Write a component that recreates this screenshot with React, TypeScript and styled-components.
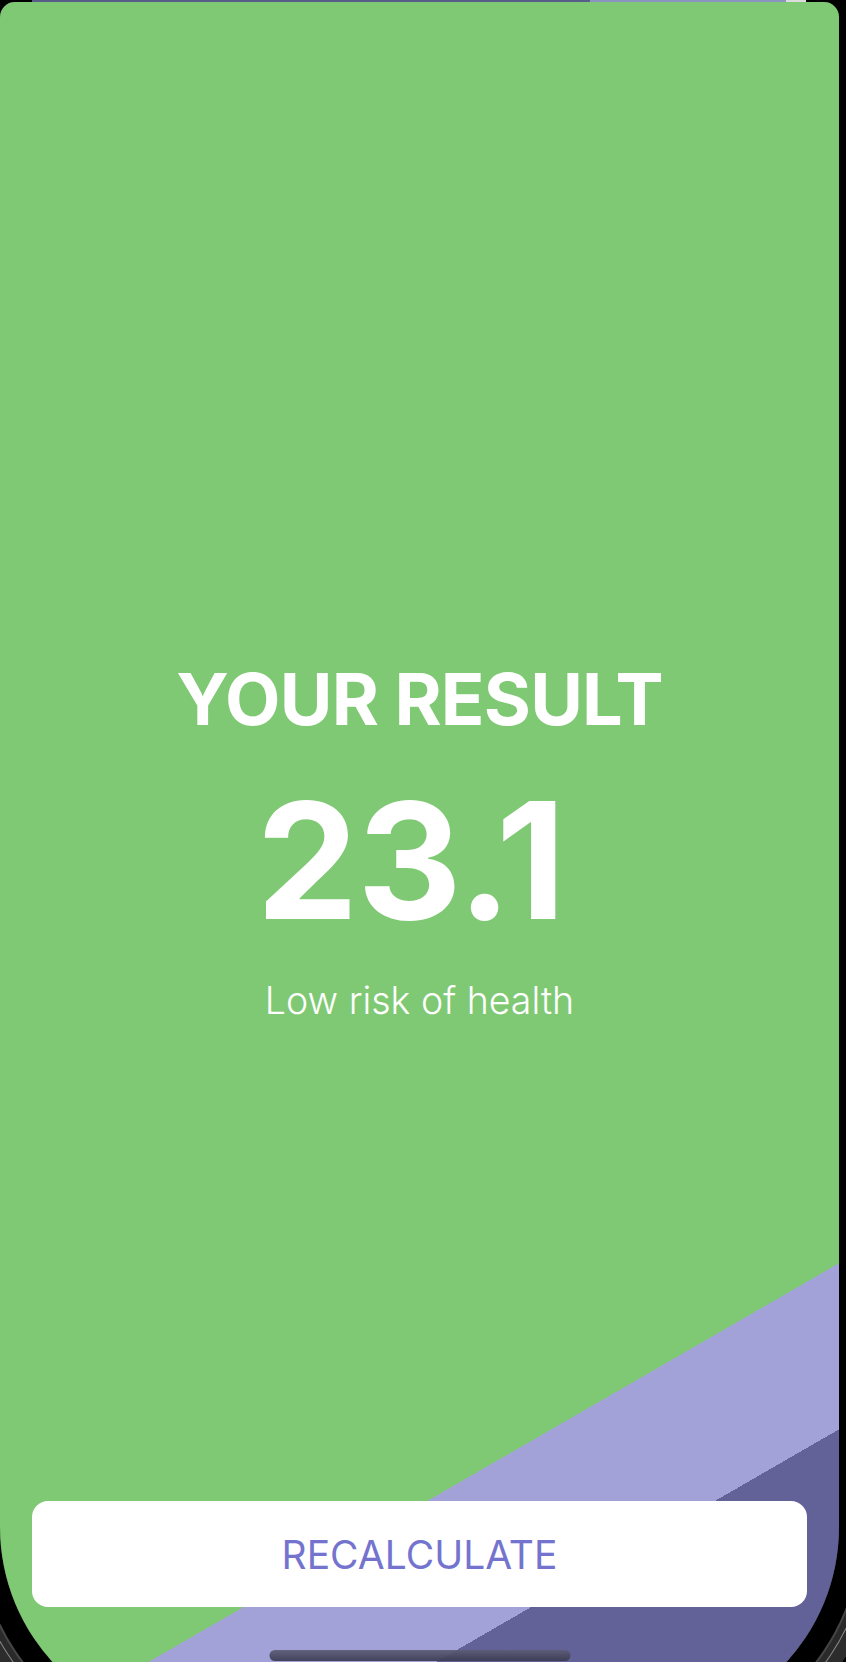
import React from "react";
import styled, { createGlobalStyle } from "styled-components";

const Global = createGlobalStyle`
  html, body {
    margin: 0;
    padding: 0;
    background: #000;
  }
  #root {
    height: 100vh;
  }
`;

const Viewport = styled.div`
  height: 100vh;
  overflow: hidden;
  background: #000;
  display: flex;
  flex-direction: column;
  font-family: Inter, "Noto Sans", "Liberation Sans", sans-serif;
`;

const TopStrip = styled.div`
  position: relative;
  z-index: 1;
  display: flex;
  height: 2px;
  flex-shrink: 0;
`;

const StripSegment = styled.div<{ $w: number; $c: string }>`
  width: ${(p) => p.$w}px;
  background: ${(p) => p.$c};
`;

const GREEN = "#80c974";
const LILAC = "#a2a2d8";
const PURPLE = "#626298";

const Screen = styled.div`
  position: relative;
  width: 839px;
  height: 1725px;
  flex-shrink: 0;
  box-sizing: border-box;
  border-radius: 15px 15px 200px 200px;
  background: linear-gradient(
    150deg,
    ${GREEN} 1511.8px,
    ${LILAC} 1511.8px,
    ${LILAC} 1655.6px,
    ${PURPLE} 1655.6px
  );
  box-shadow: 0 0 0 22px #000, 0 0 0 24px #454545, 0 0 0 30px #2a2a2a,
    0 0 0 31px #8a8a8a, 0 0 0 44px #2c2c2c;
  display: flex;
  flex-direction: column;
  align-items: center;
  padding: 661px 32px 120px;
`;

const Content = styled.div`
  flex: 1;
  display: flex;
  flex-direction: column;
  align-items: center;
  color: #fff;
`;

const Title = styled.h1`
  margin: 0;
  font-size: 72px;
  line-height: 1;
  font-weight: 700;
  letter-spacing: -0.8px;
`;

const Score = styled.div`
  margin-top: 44px;
  padding-right: 18px;
  font-size: 162px;
  line-height: 1;
  font-weight: 700;
  letter-spacing: -1px;
`;

const Caption = styled.p`
  margin: 41px 0 0;
  font-size: 37.5px;
  line-height: 1;
  font-weight: 300;
`;

const RecalcButton = styled.button`
  width: 100%;
  height: 106px;
  flex-shrink: 0;
  border: none;
  border-radius: 16px;
  background: #fff;
  color: #7474cf;
  font-family: inherit;
  font-size: 39px;
  font-weight: 400;
  line-height: 1;
  cursor: pointer;
`;

const HomeIndicator = styled.div`
  position: absolute;
  left: 50%;
  bottom: 66px;
  width: 301px;
  height: 11px;
  transform: translateX(-50%);
  border-radius: 6px;
  background: linear-gradient(#5c5c76, #3a3a50);
  opacity: 0.92;
`;

export default function App() {
  return (
    <>
      <Global />
      <Viewport>
        <TopStrip>
          <StripSegment $w={32} $c="#000" />
          <StripSegment $w={558} $c="#575c89" />
          <StripSegment $w={196} $c="#8b94c0" />
          <StripSegment $w={20} $c="#dcdcdc" />
        </TopStrip>
        <Screen>
          <Content>
            <Title>YOUR RESULT</Title>
            <Score>23.1</Score>
            <Caption>Low risk of health</Caption>
          </Content>
          <RecalcButton>RECALCULATE</RecalcButton>
          <HomeIndicator />
        </Screen>
      </Viewport>
    </>
  );
}
